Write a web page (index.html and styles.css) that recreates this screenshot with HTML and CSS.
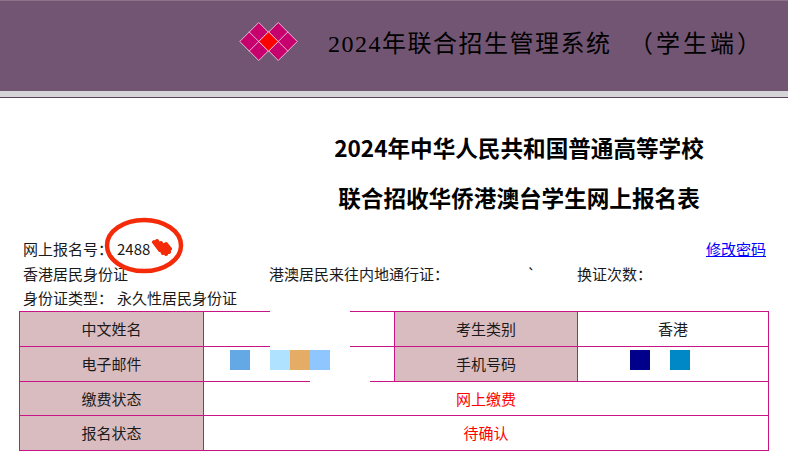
FILE: index.html
```html
<!DOCTYPE html>
<html lang="zh-CN">
<head>
    <meta charset="UTF-8">
    <meta name="viewport" content="width=device-width, initial-scale=1.0">
    <title>2024年联合招生管理系统（学生端）</title>
    <link rel="stylesheet" href="styles.css">
</head>
<body>

    <div class="header">
        <svg class="logo" width="59" height="39" viewBox="0 0 60 40">
            <path class="logo-cell" d="M20 .5 39.500 20 20 39.500 .5 20Z"/>
            <path class="logo-cell" d="M40 .5 59.500 20 40 39.500 20.500 20Z"/>
            <path class="logo-line" d="M10 10 30 30M30 10 10 30M30 10 50 30M50 10 30 30"/>
            <path class="logo-center" d="M30 10 40 20 30 30 20 20Z"/>
        </svg>
        <div class="system-title">2024年联合招生管理系统　<span class="system-suffix">（学生端）</span></div>
    </div>
    <div class="header-rule"></div>

    <h1 class="form-title">2024年中华人民共和国普通高等学校</h1>
    <h1 class="form-title second">联合招收华侨港澳台学生网上报名表</h1>

    <div class="info">
        <div class="info-row">
            <span class="info-label">网上报名号：</span>
            <span>2488</span>
            <a class="change-pwd" href="#">修改密码</a>
        </div>
        <div class="info-row">
            <span class="col-id">香港居民身份证</span>
            <span class="col-permit">港澳居民来往内地通行证：</span>
            <span class="col-mark">`</span>
            <span>换证次数：</span>
        </div>
        <div class="info-row">
            <span class="info-label">身份证类型：</span>
            <span>永久性居民身份证</span>
        </div>
    </div>

    <table class="student-table">
        <colgroup>
            <col class="col-label-a">
            <col class="col-value">
            <col class="col-label-b">
            <col class="col-value">
        </colgroup>
        <tr>
            <td class="label">中文姓名</td>
            <td class="value"></td>
            <td class="label">考生类别</td>
            <td class="value">香港</td>
        </tr>
        <tr>
            <td class="label">电子邮件</td>
            <td class="value"></td>
            <td class="label">手机号码</td>
            <td class="value"></td>
        </tr>
        <tr class="short-row">
            <td class="label">缴费状态</td>
            <td class="status" colspan="3">网上缴费</td>
        </tr>
        <tr>
            <td class="label">报名状态</td>
            <td class="status" colspan="3">待确认</td>
        </tr>
    </table>

    <!-- redaction marks lying over the form -->
    <div class="mask mask-name"></div>
    <div class="mask mask-mail"></div>
    <div class="block b1"></div>
    <div class="block b2"></div>
    <div class="block b3"></div>
    <div class="block b4"></div>
    <div class="block b5"></div>
    <div class="block b6"></div>

    <svg class="circle" width="90" height="64" viewBox="0 0 90 64">
        <ellipse class="circle-line" cx="41" cy="29.500" rx="37" ry="25.500"/>
        <path class="scribble" d="M51 26 57 34M54 25 60 37M58 27 63 38M61 29 66 36M63 28 67 33"/>
    </svg>

</body>
</html>
```

FILE: styles.css
```css
body {
    position: relative;
    margin: 0;
    font-family: "Noto Sans CJK SC", sans-serif;
    font-size: 15px;
    color: #1a1a1a;
    background: #fff;
}
.header {
    display: flex;
    align-items: center;
    gap: 30px;
    box-sizing: border-box;
    height: 91px;
    padding: 0 0 9px 239px;
    background-color: #725573;
    border-top: 1px solid #8b7289;
}
.logo-cell {
    fill: #c8006e;
    stroke: #e9bcd6;
}
.logo-line {
    fill: none;
    stroke: #e9bcd6;
}
.logo-center {
    fill: #ff0000;
    stroke: #e9bcd6;
}
.system-title {
    font-family: "Liberation Serif", "Noto Sans CJK SC", serif;
    font-size: 24px;
    letter-spacing: 1.5px;
    color: #000;
    white-space: nowrap;
}
.system-suffix {
    margin-left: 4px;
    letter-spacing: 3px;
}
.header-rule {
    height: 6px;
    background-color: #d5d5d8;
    border-bottom: 1px solid #5d4360;
}
.form-title {
    margin: 33px 0 0 250px;
    font-size: 22.600px;
    line-height: 33px;
    font-weight: bold;
    text-align: center;
    color: #000;
}
.form-title.second {
    margin-top: 17px;
}
.info {
    margin: 23px 22px 0 23px;
}
.info-row {
    display: flex;
    height: 24.500px;
    line-height: 24.500px;
    white-space: nowrap;
}
.info-label {
    width: 94px;
}
.change-pwd {
    margin-left: auto;
    color: #0000ff;
}
.col-id {
    width: 246px;
}
.col-permit {
    width: 258px;
}
.col-mark {
    width: 50px;
}
.student-table {
    width: 749px;
    margin: 0 0 0 19px;
    border-collapse: collapse;
    table-layout: fixed;
}
.col-label-a {
    width: 184px;
}
.col-label-b {
    width: 183px;
}
.col-value {
    width: 191px;
}
.student-table td {
    height: 34px;
    padding: 0;
    border: 1px solid #c71585;
    text-align: center;
    color: #1a1a1a;
}
.student-table .short-row td {
    height: 33px;
}
.student-table td.label {
    background-color: #d9bcc0;
}
.student-table td.status {
    color: #ff0000;
}
.mask {
    position: absolute;
    background-color: #fff;
}
.mask-name {
    left: 270px;
    top: 300px;
    width: 80px;
    height: 50px;
}
.mask-mail {
    left: 310px;
    top: 370px;
    width: 60px;
    height: 20px;
}
.block {
    position: absolute;
    top: 350px;
    width: 20px;
    height: 20px;
}
.b1 { left: 230px; background-color: #64a9e6; }
.b2 { left: 270px; background-color: #aee2ff; }
.b3 { left: 290px; background-color: #e5ac66; }
.b4 { left: 310px; background-color: #8fc6fd; }
.b5 { left: 630px; background-color: #00008b; }
.b6 { left: 670px; background-color: #0088c6; }
.circle {
    position: absolute;
    left: 103px;
    top: 216px;
}
.circle-line {
    fill: none;
    stroke: #f42a08;
    stroke-width: 4.500;
}
.scribble {
    fill: none;
    stroke: #f42a08;
    stroke-width: 4;
    stroke-linecap: round;
}
```
